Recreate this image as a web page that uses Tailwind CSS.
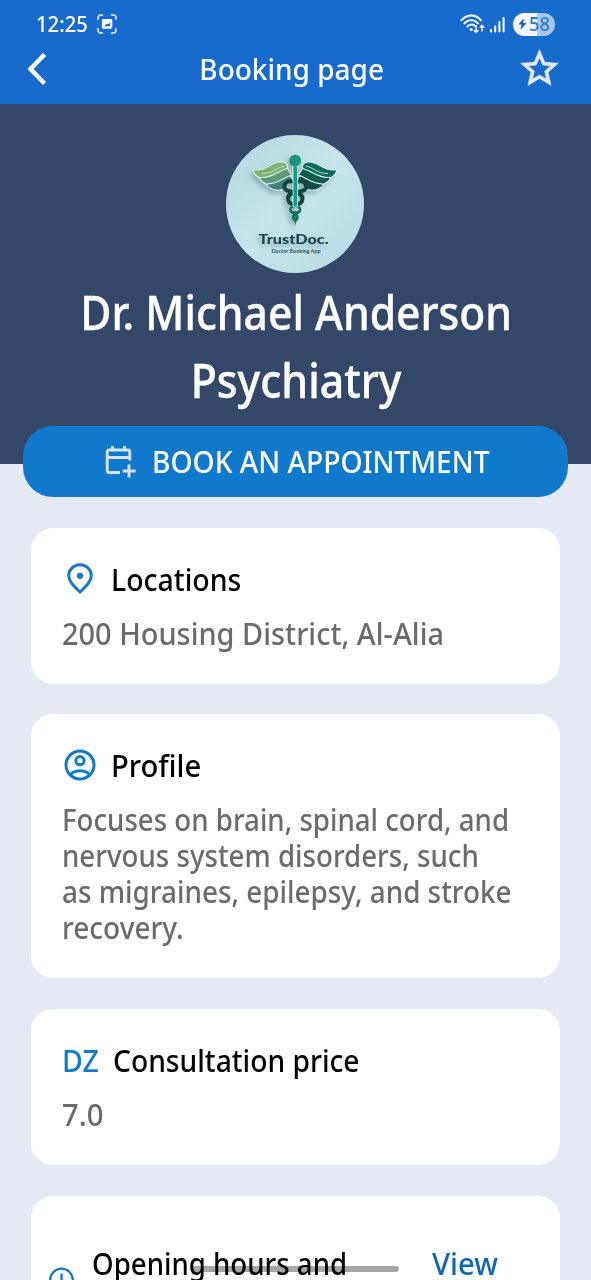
<!DOCTYPE html>
<html lang="en">
<head>
<meta charset="utf-8">
<title>Booking page</title>
<script src="https://cdn.jsdelivr.net/npm/@tailwindcss/browser@4"></script>
</head>
<body class="h-[1280px] w-[591px] overflow-hidden bg-[#e5e9f4] font-['Noto_Sans',sans-serif] font-medium">
<div class="relative flex h-[1280px] w-[591px] flex-col overflow-hidden">

  <header class="flex h-[104px] shrink-0 flex-col bg-[#176bcd] text-white">
    <!-- status bar -->
    <div class="flex h-[46px] items-center pl-[36px] pr-[36px] pt-[2px]">
      <span class="w-[61px]"><span class="-mt-[2px] block w-max origin-left scale-x-[.92] whitespace-nowrap text-[22px] leading-none">12:25</span></span>
      <svg class="h-[20px] w-[20px]" viewBox="0 0 20 20" fill="none" stroke="#e9f1fb" stroke-width="1.500" stroke-linecap="round"><path d="M1 5.500V4a3 3 0 0 1 3-3h1.500M14.500 1H16a3 3 0 0 1 3 3v1.500M19 14.500V16a3 3 0 0 1-3 3h-1.500M5.500 19H4a3 3 0 0 1-3-3v-1.500"/><path fill-rule="evenodd" d="M6.500 5h7.200a1.600 1.600 0 0 1 1.600 1.600v6.500a1.600 1.600 0 0 1-1.600 1.600H6.500a1.600 1.600 0 0 1-1.600-1.600V6.600A1.600 1.600 0 0 1 6.500 5zM7 12.300h6.200V8.600l-2 1.700-1.300-.6z" fill="#fff" stroke="none"/></svg>
      <svg class="ml-auto h-[20px] w-[25px]" viewBox="0 0 25 20" fill="none" stroke="#fff" stroke-width="1.900" stroke-linecap="round"><path d="M1.300 6.300C7-.2 15.500-.2 21 6.300M4.200 9.600c4-4.600 10-4.600 14 0M7.400 12.700c2.200-2.700 5.600-2.900 8-.7"/><circle cx="11.200" cy="15.400" r="1.500" fill="#fff" stroke="none"/><path d="M16.200 12v6M14.300 16.400l1.900 1.900 1.900-1.900M22 17v-5.500M20.200 13.200l1.800-1.900 1.800 1.900" stroke-width="1.400"/></svg>
      <svg class="ml-[5px] h-[17px] w-[15px]" viewBox="0 0 15 17" fill="#fff"><rect x="0" y="13" width="2" height="3.500" rx="1"/><rect x="4.200" y="9.500" width="2" height="7" rx="1"/><rect x="8.400" y="5" width="2" height="11.500" rx="1"/><rect x="12.600" y="1" width="2" height="15.500" rx="1"/></svg>
      <div class="ml-[8px] flex h-[23px] w-[42px] items-center rounded-full bg-linear-to-r from-[#f2f7fd] from-[58%] to-[#a6c8ef] to-[58%] pl-[5px] text-[#3478cc]">
        <svg class="h-[14px] w-[9px] shrink-0" viewBox="0 0 10 13" fill="#1f5fb5"><path d="M6.300 0L.4 7h3.500L2.800 13 9.600 5.500H5.800z"/></svg>
        <span class="ml-[2px] block w-[22px] origin-left scale-x-[.92] whitespace-nowrap text-[20px] leading-none">58</span>
      </div>
    </div>
    <!-- title bar -->
    <div class="flex h-[46px] items-center pl-[25px] pr-[29px]">
      <svg class="h-[34px] w-[22px]" viewBox="0 0 22 34" fill="none" stroke="#fff" stroke-width="4.400"><path d="M19.500 2.500L5.500 17l14 14.500"/></svg>
      <div class="flex flex-1 justify-center pl-[19px]"><span class="-mt-[2px] block w-max scale-x-[.965] whitespace-nowrap text-[29px] leading-none">Booking page</span></div>
      <svg class="-mt-[1px] h-[45px] w-[45px]" viewBox="0 0 24 24" fill="#e6e8f0" stroke="#e6e8f0" stroke-width=".35"><path d="M22 9.240l-7.190-.62L12 2 9.190 8.630 2 9.240l5.460 4.730L5.820 21 12 17.270 18.180 21l-1.630-7.030L22 9.240zM12 15.400l-3.760 2.270 1-4.280-3.320-2.880 4.380-.38L12 6.100l1.710 4.040 4.380.38-3.320 2.880 1 4.280L12 15.400z"/></svg>
    </div>
  </header>

  <section class="flex h-[360px] shrink-0 flex-col items-center bg-[#334768] pt-[31px] text-white">
    <svg class="mr-[1px] h-[138px] w-[138px]" viewBox="0 0 138 138">
      <defs>
        <linearGradient id="disc" x1="0" y1="0" x2="1" y2="1"><stop offset="0" stop-color="#b5d7df"/><stop offset=".5" stop-color="#c6e5eb"/><stop offset="1" stop-color="#b4dbe3"/></linearGradient>
        <filter id="soft" x="-30%" y="-30%" width="160%" height="160%"><feDropShadow dx="-3" dy="3" stdDeviation="2.500" flood-color="#5f8792" flood-opacity=".55"/></filter>
      </defs>
      <circle cx="69" cy="69" r="69" fill="url(#disc)"/>
      <g filter="url(#soft)">
        <g stroke="#dcefee" stroke-width="1.100" stroke-linejoin="round">
          <path d="M40 49c9-.5 15-6 22-9.500l4 3v4c-5 0-8 3-7 7.500-8 2.500-15 .5-19-5z" fill="#3f7f7d"/>
          <path d="M33 42.500c10 .5 16-3.500 21-7 3-2 6-2.500 7.500-2 1.500 3 2.500 4.500 4.500 6.500-8 2-14 9.500-26 9-3.500-1.500-5.500-3.500-7-6.500z" fill="#5d9a76"/>
          <path d="M27 34.800C37 36 42 31.500 48 28.500c6-3 12-1.500 13.500 2 .5 2-.5 3.500-3 4C51 36.500 46 43.500 33 42.500c-3-1.500-5-4-6-7.700z" fill="#7db271"/>
          <path d="M98 49c-9-.5-15-6-22-9.500l-4 3v4c5 0 8 3 7 7.500 8 2.500 15 .5 19-5z" fill="#0a4f45"/>
          <path d="M105 42.500c-10 .5-16-3.500-21-7-3-2-6-2.500-7.500-2-1.500 3-2.500 4.500-4.500 6.500 8 2 14 9.500 26 9 3.500-1.500 5.500-3.500 7-6.500z" fill="#0b5d50"/>
          <path d="M111 34.800C101 36 96 31.500 90 28.500c-6-3-12-1.500-13.500 2-.5 2 .5 3.500 3 4C87 36.500 92 43.500 105 42.500c3-1.500 5-4 6-7.700z" fill="#0c6c5b"/>
          <path d="M36 38.500c10 .5 15-6 22-7.500M102 38.500c-10 .5-15-6-22-7.500" fill="none" stroke-width=".8"/>
        </g>
        <path d="M66 76l3.200 15 3.200-15z" fill="#1a8a73"/>
        <path d="M66 46.500c-8-1.500-10.500 8-3.500 9.500 5 1.500 14 1 14 7.500 0 4-3.500 6-7.500 6.500M72.500 46.500c8-1.500 10.500 8 3.500 9.500-5 1.500-14 1-14 7.500 0 4 3.500 6 7.500 6.500" fill="none" stroke="#0c4440" stroke-width="4" stroke-linecap="round"/>
        <path d="M69 71.500c-6 0-6 5-1 7 4 2 5 5 1 7.500M69.500 71.500c6 0 6 5 1 7-4 2-5 5-1 7.500" fill="none" stroke="#137260" stroke-width="2.400"/>
        <path d="M67 31h4.600v41H67z" fill="#189b80" stroke="#cfe9e9" stroke-width=".9"/>
        <circle cx="69.200" cy="25.700" r="5.900" fill="#16947f"/>
        <text x="32.500" y="109" textLength="70" lengthAdjust="spacingAndGlyphs" font-family="Lato, sans-serif" font-weight="900" font-size="13.500" fill="#173f4d">TrustDoc.</text>
      </g>
      <text x="45.500" y="117.500" textLength="49" lengthAdjust="spacingAndGlyphs" font-family="Lato, sans-serif" font-weight="700" font-size="5.200" fill="#2c5562">Doctor Booking App</text>
    </svg>
    <h1 class="flex w-full flex-col items-center text-[48px] leading-[68px] [-webkit-text-stroke:0.4px]">
      <span class="ml-[1px] mt-[5px] block w-max scale-x-[.888] whitespace-nowrap">Dr. Michael Anderson</span>
      <span class="ml-[1px] block w-max scale-x-[.893] whitespace-nowrap">Psychiatry</span>
    </h1>
  </section>

  <main class="-mt-[38px] flex flex-1 flex-col">
    <button class="mx-[23px] flex h-[71px] w-[545px] shrink-0 items-center rounded-[30px] bg-[#1079cb] pl-[82px] text-white">
      <svg class="-mt-[1px] h-[33px] w-[31px] shrink-0" viewBox="0 0 31 33" fill="none" stroke="#d6e2f0" stroke-width="2.900"><path d="M15 27.500H4.200a2 2 0 0 1-2-2V7a2 2 0 0 1 2-2h18.600a2 2 0 0 1 2 2v8.500" /><path d="M2 12.500h23M7.500 1v5M19.500 1v5M24 19.500v13M17.800 26h12.800"/></svg>
      <span class="ml-[16px] block w-max origin-left scale-x-[.94] whitespace-nowrap text-[30px] leading-none">BOOK AN APPOINTMENT</span>
    </button>

    <div class="mt-[31px] flex flex-col gap-[30px] pl-[31px] pr-[31px]">
      <article class="h-[156px] rounded-[22px] bg-white pl-[31px] pt-[33px]">
        <h2 class="flex h-[36px] items-center text-[31px] leading-[36px] text-black">
          <svg class="-mt-[2px] ml-[5px] h-[31px] w-[26px] shrink-0" viewBox="0 0 26 31" fill="none" stroke="#167bc4" stroke-width="3"><path d="M13 29C6 22.500 1.700 18 1.700 12.500a11.300 10.800 0 0 1 22.600 0C24.300 18 20 22.500 13 29z"/><circle cx="13" cy="12.800" r="3.100" fill="#167bc4" stroke="none"/></svg>
          <span class="ml-[18px] block w-max origin-left scale-x-[.917] whitespace-nowrap">Locations</span>
        </h2>
        <p class="mt-[18px] text-[31px] leading-[36px] text-[#6b6b6b]"><span class="block w-max origin-left scale-x-[.933] whitespace-nowrap">200 Housing District, Al-Alia</span></p>
      </article>

      <article class="h-[264px] rounded-[22px] bg-white pl-[31px] pt-[33px]">
        <h2 class="flex h-[36px] items-center text-[31px] leading-[36px] text-black">
          <svg class="ml-[2px] h-[32px] w-[32px] shrink-0" viewBox="0 0 32 32" fill="none" stroke="#127bc9" stroke-width="3"><circle cx="16" cy="16" r="14"/><circle cx="16" cy="11.700" r="4.100"/><path d="M6.500 25.500c5-5 14-5 19 0"/></svg>
          <span class="ml-[15px] block w-max origin-left scale-x-[.94] whitespace-nowrap">Profile</span>
        </h2>
        <p class="mt-[18px] flex flex-col items-start text-[31px] leading-[36px] text-[#6b6b6b]">
          <span class="block w-max origin-left scale-x-[.892] whitespace-nowrap">Focuses on brain, spinal cord, and</span>
          <span class="block w-max origin-left scale-x-[.893] whitespace-nowrap">nervous system disorders, such</span>
          <span class="block w-max origin-left scale-x-[.898] whitespace-nowrap">as migraines, epilepsy, and stroke</span>
          <span class="block w-max origin-left scale-x-[.903] whitespace-nowrap">recovery.</span>
        </p>
      </article>

      <article class="mt-[1px] h-[156px] rounded-[22px] bg-white pl-[31px] pt-[33px]">
        <h2 class="flex h-[36px] items-center text-[31px] leading-[36px] text-black">
          <span class="w-[51px] text-[#127bc9]"><span class="block w-max origin-left scale-x-[.92]">DZ</span></span>
          <span class="block w-max origin-left scale-x-[.91] whitespace-nowrap">Consultation price</span>
        </h2>
        <p class="mt-[18px] text-[31px] leading-[36px] text-[#6b6b6b]"><span class="block w-max origin-left scale-x-[.945]">7.0</span></p>
      </article>

      <article class="mt-[1px] flex h-[156px] items-start rounded-[22px] bg-white pt-[49px] text-[31px] leading-[36px] text-black">
        <svg class="ml-[18px] mt-[22px] h-[26px] w-[26px] shrink-0" viewBox="0 0 26 26" fill="none" stroke="#127bc9" stroke-width="2.300"><circle cx="12.500" cy="13" r="11.300"/><path d="M12.500 6.500V13l5 3"/></svg>
        <span class="ml-[17px] w-[340px]"><span class="block w-max origin-left scale-x-[.891] whitespace-nowrap">Opening hours and</span></span>
        <span class="block w-max origin-left scale-x-[.948] text-[#1268ad]">View</span>
      </article>
    </div>
  </main>

  <div class="absolute left-[192px] top-[1266px] h-[6px] w-[207px] rounded-full bg-black/35"></div>
</div>
</body>
</html>
